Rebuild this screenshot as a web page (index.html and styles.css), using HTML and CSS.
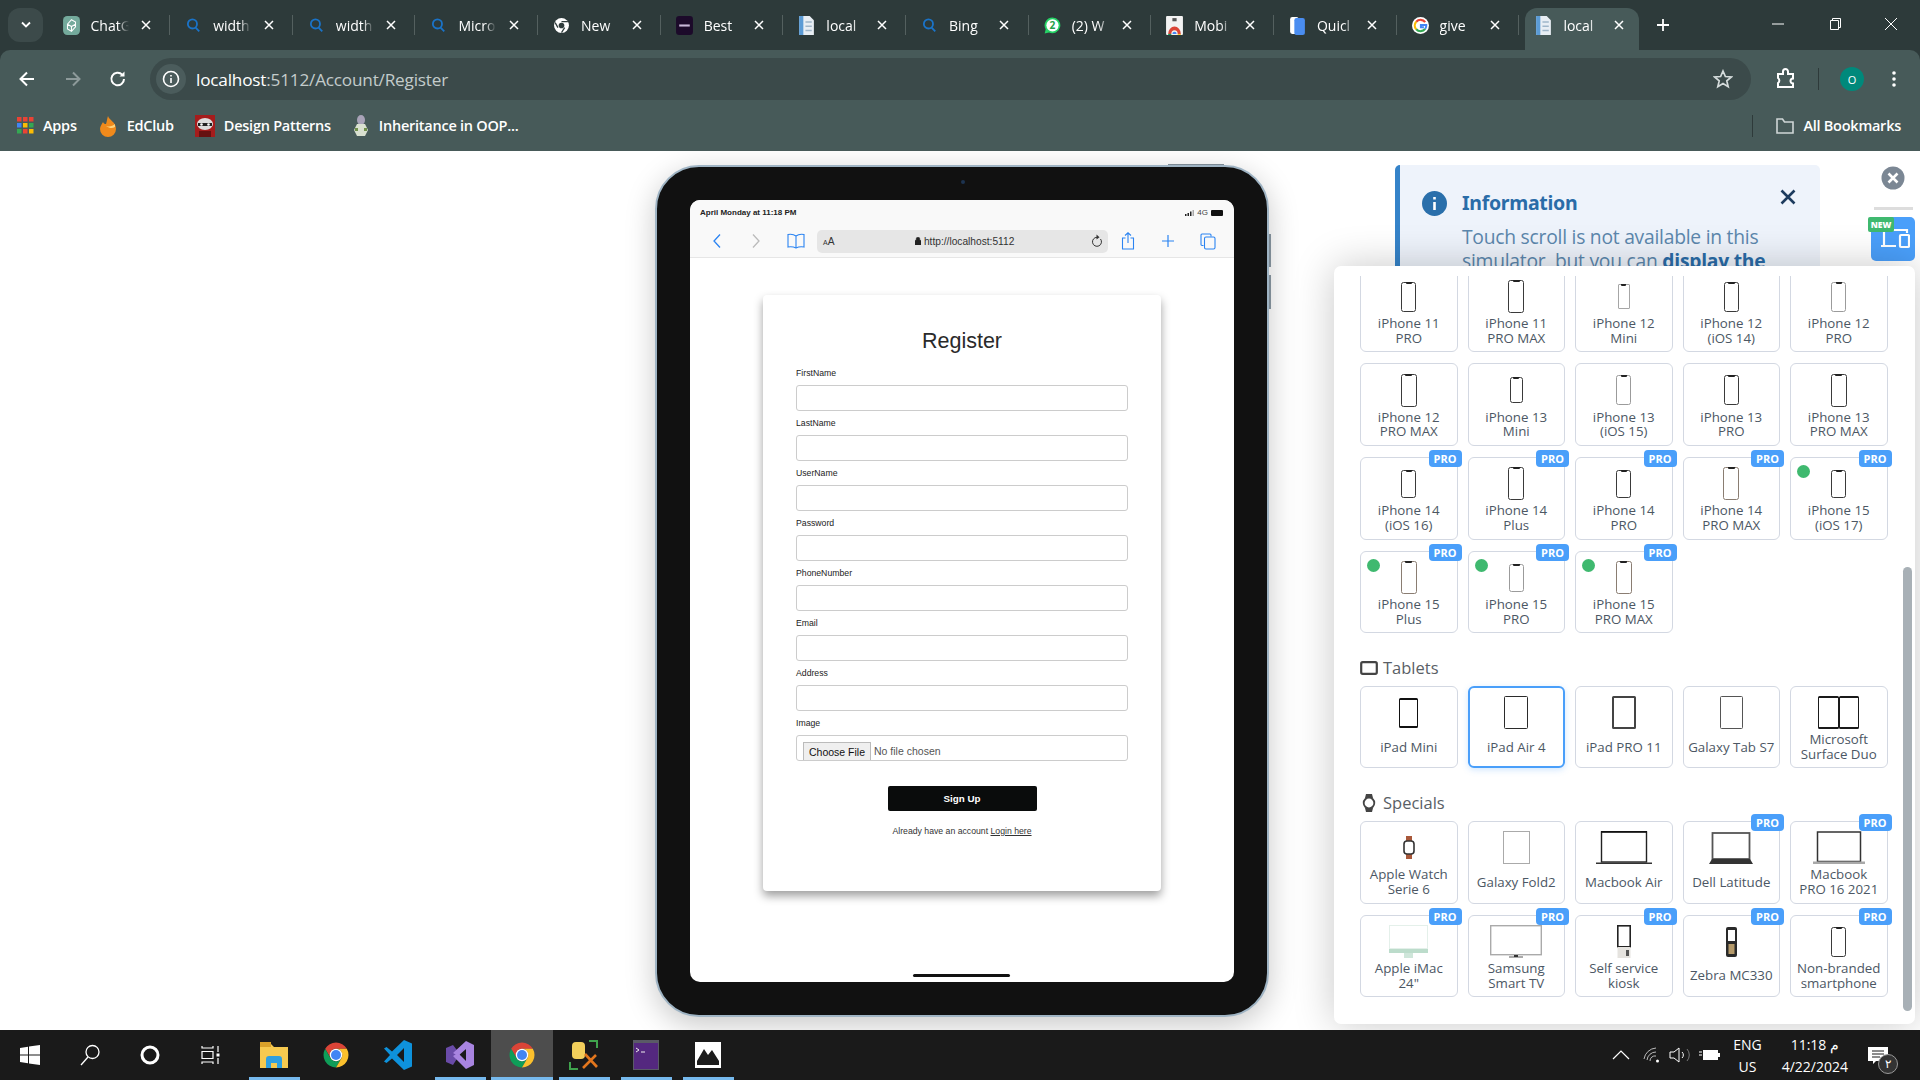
FILE: index.html
```html
<!DOCTYPE html>
<html lang="en">
<head>
    <meta charset="UTF-8">
    <title>Register</title>
    <link rel="stylesheet" href="styles.css">
</head>
<body>
    <svg class="defs" width="0" height="0">
        <symbol id="chrome" viewBox="0 0 24 24">
            <path fill="#db4437" d="M3.34 7A10 10 0 0 1 20.66 7H12A5 5 0 0 0 7.67 14.5Z"/>
            <path fill="#0f9d58" d="M3.34 7A10 10 0 0 0 12 22L16.33 14.5A5 5 0 0 1 7.67 14.5Z"/>
            <path fill="#fbc02d" d="M20.66 7A10 10 0 0 1 12 22L16.33 14.5A5 5 0 0 0 12 7Z"/>
            <circle cx="12" cy="12" r="5" fill="#fff"/>
            <circle cx="12" cy="12" r="4" fill="#4285f4"/>
        </symbol>
        <symbol id="search" viewBox="0 0 16 16">
            <circle cx="7" cy="6.5" r="4.3" fill="none" stroke="#1a73c8" stroke-width="1.7"/>
            <path d="M10 10l3.4 3.6" stroke="#1a73c8" stroke-width="1.7" fill="none"/>
        </symbol>
        <symbol id="doc" viewBox="0 0 16 18">
            <path fill="#e8eef4" d="M1 0h10l4 4v14H1z"/>
            <path fill="#5b9bd5" d="M1 0h4v18H1z"/>
            <path fill="#9fb6c9" d="M7 5h6v1.500H7zM7 9h6v1.500H7zM7 13h6v1.500H7z"/>
        </symbol>
        <symbol id="close" viewBox="0 0 12 12">
            <path d="M2 2l8 8M10 2l-8 8" fill="none" stroke="currentColor" stroke-width="1.500"/>
        </symbol>
    </svg>

    <div class="browser">
        <div class="tabstrip">
            <div class="tab-list-btn"><svg width="12" height="8" viewBox="0 0 12 8"><path d="M2 1.500l4 4 4-4" fill="none" stroke="#fff" stroke-width="1.800"/></svg></div>
            <div class="tab">
                <svg class="favicon" viewBox="0 0 16 18"><rect width="16" height="18" rx="4" fill="#74aa9c"/><path d="M8 3.500l3.800 2.200v4.600L8 14.500l-3.800-2.200V7.700z M4.200 7.700L8 10l3.800-2.300M8 10v4.500" fill="none" stroke="#fff" stroke-width="1"/></svg>
                <span class="tab-title">ChatG</span>
                <svg class="tab-close"><use href="#close"/></svg>
            </div>
            <div class="tab">
                <svg class="favicon"><use href="#search"/></svg>
                <span class="tab-title">width</span>
                <svg class="tab-close"><use href="#close"/></svg>
            </div>
            <div class="tab">
                <svg class="favicon"><use href="#search"/></svg>
                <span class="tab-title">width</span>
                <svg class="tab-close"><use href="#close"/></svg>
            </div>
            <div class="tab">
                <svg class="favicon"><use href="#search"/></svg>
                <span class="tab-title">Micro</span>
                <svg class="tab-close"><use href="#close"/></svg>
            </div>
            <div class="tab">
                <svg class="favicon" viewBox="0 0 24 24"><circle cx="12" cy="12" r="10.500" fill="#fff"/><circle cx="12" cy="12" r="4" fill="#2f3c3c"/><path d="M12 6.500h9M7 15l-4-7M16.500 15L12 22" stroke="#2f3c3c" stroke-width="1.800" fill="none"/></svg>
                <span class="tab-title">New</span>
                <svg class="tab-close"><use href="#close"/></svg>
            </div>
            <div class="tab">
                <svg class="favicon" viewBox="0 0 16 18"><rect width="16" height="18" rx="3" fill="#1c0a2a"/><rect x="3" y="8" width="10" height="2" fill="#c8b8d8"/></svg>
                <span class="tab-title">Best</span>
                <svg class="tab-close"><use href="#close"/></svg>
            </div>
            <div class="tab">
                <svg class="favicon"><use href="#doc"/></svg>
                <span class="tab-title">local</span>
                <svg class="tab-close"><use href="#close"/></svg>
            </div>
            <div class="tab">
                <svg class="favicon"><use href="#search"/></svg>
                <span class="tab-title">Bing</span>
                <svg class="tab-close"><use href="#close"/></svg>
            </div>
            <div class="tab">
                <svg class="favicon" viewBox="0 0 20 20"><path fill="#25d366" d="M10 .5a9.300 9.300 0 0 0-8 14L.8 19.500l5.100-1.300A9.300 9.300 0 1 0 10 .5z"/><circle cx="10" cy="9.800" r="7.200" fill="#fff"/><text x="10" y="14" text-anchor="middle" class="wa-count">2</text></svg>
                <span class="tab-title">(2) W</span>
                <svg class="tab-close"><use href="#close"/></svg>
            </div>
            <div class="tab">
                <svg class="favicon" viewBox="0 0 16 18"><rect width="16" height="18" rx="1" fill="#f3f3f3"/><rect x="6" y="2" width="4" height="3" fill="#555"/><path fill="#db4437" d="M2 17a6 7 0 0 1 12 0h-3a3 3.500 0 0 0-6 0z"/><path fill="#4285f4" d="M6 17a2 2 0 0 1 4 0z"/><path fill="#0f9d58" d="M2 17h3v1H2z"/><path fill="#fbc02d" d="M11 17h3v1h-3z"/></svg>
                <span class="tab-title">Mobi</span>
                <svg class="tab-close"><use href="#close"/></svg>
            </div>
            <div class="tab">
                <svg class="favicon" viewBox="0 0 16 18"><rect x="1" y="1" width="8" height="16" rx="2" fill="#fff"/><rect x="5" y="2" width="10" height="16" rx="2" fill="#4a8df0"/></svg>
                <span class="tab-title">Quicl</span>
                <svg class="tab-close"><use href="#close"/></svg>
            </div>
            <div class="tab">
                <svg class="favicon" viewBox="0 0 20 20"><circle cx="10" cy="10" r="10" fill="#fff"/><path d="M15.500 6A6.800 6.800 0 0 0 5 5.500" fill="none" stroke="#ea4335" stroke-width="2.600"/><path d="M5 5.500a6.800 6.800 0 0 0 0 9" fill="none" stroke="#fbbc05" stroke-width="2.600"/><path d="M5 14.500A6.800 6.800 0 0 0 15.500 14" fill="none" stroke="#34a853" stroke-width="2.600"/><path d="M15.500 14a6.800 6.800 0 0 0 1.300-4.500H10.500v2.500h3.500" fill="none" stroke="#4285f4" stroke-width="2.400"/></svg>
                <span class="tab-title">give</span>
                <svg class="tab-close"><use href="#close"/></svg>
            </div>
            <div class="tab tab-active">
                <svg class="favicon"><use href="#doc"/></svg>
                <span class="tab-title">local</span>
                <svg class="tab-close"><use href="#close"/></svg>
            </div>
            <svg class="new-tab" width="16" height="16" viewBox="0 0 16 16"><path d="M8 2v12M2 8h12" stroke="#fff" stroke-width="1.800"/></svg>
            <div class="win-controls">
                <svg width="14" height="14" viewBox="0 0 14 14"><path d="M1 7h12" stroke="#fff"/></svg>
                <svg width="14" height="14" viewBox="0 0 14 14"><path d="M2.500 3.500h8v9h-8zM4.500 3.500v-2h8v9h-2" fill="none" stroke="#fff"/></svg>
                <svg width="14" height="14" viewBox="0 0 14 14"><path d="M1 1l12 12M13 1L1 13" stroke="#fff"/></svg>
            </div>
        </div>

        <div class="toolbar">
            <svg class="nav-btn" viewBox="0 0 20 20"><path d="M17 10H4M10 3.500L3.500 10l6.500 6.500" fill="none" stroke="#fff" stroke-width="2"/></svg>
            <svg class="nav-btn nav-off" viewBox="0 0 20 20"><path d="M3 10h13M10 3.500l6.500 6.500-6.500 6.500" fill="none" stroke="#8d9a9a" stroke-width="2"/></svg>
            <svg class="nav-btn" viewBox="0 0 20 20"><path d="M16 10a6.300 6.300 0 1 1-1.800-4.400" fill="none" stroke="#fff" stroke-width="2"/><path d="M16.500 2.500v5h-5z" fill="#fff"/></svg>
            <div class="omnibox">
                <span class="site-info"><svg width="18" height="18" viewBox="0 0 18 18"><circle cx="9" cy="9" r="7.500" fill="none" stroke="#fff" stroke-width="1.600"/><path d="M9 8v5M9 5v1.600" stroke="#fff" stroke-width="1.600"/></svg></span>
                <span class="url"><b>localhost</b>:5112/Account/Register</span>
                <svg class="star" width="20" height="20" viewBox="0 0 20 20"><path d="M10 2l2.400 5.500 5.900.5-4.500 3.900 1.400 5.800L10 14.600l-5.200 3.100 1.400-5.800L1.700 8l5.900-.5z" fill="none" stroke="#d5dcdc" stroke-width="1.700"/></svg>
            </div>
            <svg class="ext" width="22" height="22" viewBox="0 0 22 22"><path d="M3 6h5V3.500a2.500 2.500 0 0 1 5 0V6h5v4.500a2.500 2.500 0 0 0 0 5V19H3v-4a3 3 0 0 0 0-5z" fill="none" stroke="#fff" stroke-width="2"/></svg>
            <span class="vsep"></span>
            <span class="avatar">O</span>
            <svg class="dots" width="4" height="18" viewBox="0 0 4 18"><circle cx="2" cy="3" r="1.800" fill="#fff"/><circle cx="2" cy="9" r="1.800" fill="#fff"/><circle cx="2" cy="15" r="1.800" fill="#fff"/></svg>
        </div>

        <div class="bookmarks">
            <a class="bm">
                <svg class="bm-apps" width="17" height="17" viewBox="0 0 17 17"><path fill="#ea4335" d="M0 0h4.500v4.500H0zM6 0h4.500v4.500H6zM12 0h4.500v4.500H12z"/><path fill="#4285f4" d="M0 6h4.500v4.500H0z"/><path fill="#fbbc05" d="M6 6h4.500v4.500H6z"/><path fill="#34a853" d="M12 6h4.500v4.500H12z"/><path fill="#34a853" d="M0 12h4.500v4.500H0z"/><path fill="#ea4335" d="M6 12h4.500v4.500H6z"/><path fill="#fbbc05" d="M12 12h4.500v4.500H12z"/></svg>
                Apps
            </a>
            <a class="bm">
                <svg width="20" height="22" viewBox="0 0 20 22"><path d="M10 1c1 4 8 6 8 13a8 8 0 0 1-16 0c0-3 2-5 3-7 1 2 2 2 3 2 1-3 1-5 2-8z" fill="#f08a1c"/><path d="M8 11c3 1 7 0 9-2v3c-3 2-6 1-9-1z" fill="#ffd27a"/></svg>
                EdClub
            </a>
            <a class="bm">
                <svg width="20" height="22" viewBox="0 0 20 22"><rect width="20" height="22" fill="#a51c1c"/><ellipse cx="10" cy="9" rx="8" ry="6" fill="#ddd"/><path d="M3 8h14v3H3z" fill="#222"/><circle cx="6.500" cy="9.500" r="1.300" fill="#fff"/><circle cx="13.500" cy="9.500" r="1.300" fill="#fff"/><path d="M4 16h12v6H4z" fill="#611"/></svg>
                Design Patterns
            </a>
            <a class="bm">
                <svg width="18" height="22" viewBox="0 0 18 22"><ellipse cx="9" cy="5" rx="4" ry="5" fill="#a9a3b8"/><path d="M5 9h8l3 6-3 6H5l-3-6z" fill="#d9e0d0"/><path d="M3 13h3v3H3zM12 13h3v3h-3z" fill="#6f8f4a"/></svg>
                Inheritance in OOP...
            </a>
            <span class="bm-spacer"></span>
            <span class="vsep bm-sep"></span>
            <a class="bm bm-all">
                <svg width="20" height="18" viewBox="0 0 20 18"><path d="M2 16V2h5.500l2 3H18v11z" fill="none" stroke="#cfd6d6" stroke-width="1.600"/></svg>
                All Bookmarks
            </a>
        </div>
    </div>

    <main class="desk">
        <div class="ipad">
            <span class="camera"></span>
            <span class="side-btn side-top"></span>
            <span class="side-btn side-one"></span>
            <span class="side-btn side-two"></span>
            <div class="screen">
                <div class="statusbar">
                    <span>April Monday at 11:18 PM</span>
                    <span class="status-right">
                        <svg width="9" height="6" viewBox="0 0 9 6"><path fill="#222" d="M0 4h1.500v2H0zM2.500 3H4v3H2.500zM5 1.500h1.500V6H5z"/><path fill="#aaa" d="M7.500 0H9v6H7.500z"/></svg>
                        4G
                        <span class="battery"></span>
                    </span>
                </div>
                <div class="safari-bar">
                    <svg class="s-ic s-back" viewBox="0 0 10 16"><path d="M8 1.500L2 8l6 6.500" fill="none" stroke="#2b84f2" stroke-width="1.300"/></svg>
                    <svg class="s-ic s-fwd" viewBox="0 0 10 16"><path d="M2 1.500L8 8l-6 6.500" fill="none" stroke="#bbb" stroke-width="1.300"/></svg>
                    <svg class="s-ic s-book" viewBox="0 0 18 16"><path d="M9 3C7 1.500 4 1 1 1.500V14c3-.5 6 0 8 1 2-1 5-1.500 8-1V1.500C14 1 11 1.500 9 3zM9 3v12" fill="none" stroke="#2b84f2" stroke-width="1.100"/></svg>
                    <div class="s-url">
                        <span class="s-aa"><small>A</small>A</span>
                        <span class="s-addr"><svg width="6" height="8" viewBox="0 0 6 8"><path d="M0 3.500h6V8H0zM1.200 3.500V2a1.800 1.800 0 0 1 3.600 0v1.500" fill="#222" stroke="#222" stroke-width=".6"/></svg> http://localhost:5112</span>
                        <svg width="12" height="14" viewBox="0 0 12 14"><path d="M9.500 5a4.500 4.500 0 1 1-3.500-1.700" fill="none" stroke="#333" stroke-width="1"/><path d="M5.500 0.500L8.500 3.300 5.500 5.500z" fill="#333"/></svg>
                    </div>
                    <svg class="s-ic s-share" viewBox="0 0 14 18"><path d="M4.500 6H1.500v11h11V6H9.500M7 11V1M4 3.500L7 .8l3 2.700" fill="none" stroke="#2b84f2" stroke-width="1.100"/></svg>
                    <svg class="s-ic s-plus" viewBox="0 0 14 14"><path d="M7 1v12M1 7h12" stroke="#2b84f2" stroke-width="1.200"/></svg>
                    <svg class="s-ic s-copy" viewBox="0 0 16 17"><path d="M3.500 12.500H2a1 1 0 0 1-1-1V2a1 1 0 0 1 1-1h8a1 1 0 0 1 1 1v1.500" fill="none" stroke="#2b84f2" stroke-width="1.100"/><rect x="4.500" y="4" width="10.500" height="12" rx="1.500" fill="none" stroke="#2b84f2" stroke-width="1.100"/></svg>
                </div>
                <div class="register-card">
                    <h1>Register</h1>
                    <div class="field"><label>FirstName</label><input type="text"></div>
                    <div class="field"><label>LastName</label><input type="text"></div>
                    <div class="field"><label>UserName</label><input type="text"></div>
                    <div class="field"><label>Password</label><input type="text"></div>
                    <div class="field"><label>PhoneNumber</label><input type="text"></div>
                    <div class="field"><label>Email</label><input type="text"></div>
                    <div class="field"><label>Address</label><input type="text"></div>
                    <div class="field">
                        <label>Image</label>
                        <div class="file-input"><span class="file-btn">Choose File</span><span class="file-none">No file chosen</span></div>
                    </div>
                    <button class="signup" type="button">Sign Up</button>
                    <p class="have-account">Already have an account <a>Login here</a></p>
                </div>
                <span class="home-bar"></span>
            </div>
        </div>

        <div class="info-box">
            <svg class="info-icon" width="25" height="25" viewBox="0 0 25 25"><circle cx="12.500" cy="12.500" r="12.500" fill="#2a6fab"/><path d="M12.500 11v8M12.500 6v2.500" stroke="#fff" stroke-width="2.600"/></svg>
            <div class="info-body">
                <h3>Information</h3>
                <p>Touch scroll is not available in this simulator, but you can <b>display the</b></p>
            </div>
            <svg class="info-close" width="16" height="16" viewBox="0 0 16 16"><path d="M1.500 1.500l13 13M14.500 1.500l-13 13" stroke="#1d3b5e" stroke-width="2.600"/></svg>
        </div>

        <svg class="round-close" width="24" height="24" viewBox="0 0 24 24"><circle cx="12" cy="12" r="11.500" fill="#7b8794"/><path d="M7.500 7.500l9 9M16.500 7.500l-9 9" stroke="#fff" stroke-width="2.600"/></svg>
        <span class="side-divider"></span>
        <div class="devices-btn">
            <span class="new-badge">NEW</span>
            <svg width="30" height="22" viewBox="0 0 30 22"><path d="M4 2v16M1 19h15M6 3h21v3" fill="none" stroke="#fff" stroke-width="2.200"/><rect x="20" y="8" width="9" height="12" rx="1" fill="none" stroke="#fff" stroke-width="2.200"/><rect x="1" y="18" width="15" height="2" fill="#fff"/></svg>
        </div>

        <div class="device-panel">
            <div class="device-scroll">
                <div class="device-grid">
                    <div class="device"><div class="device-img"><span class="phone ph-md"></span></div><div class="device-name">iPhone 11<br>PRO</div></div>
                    <div class="device"><div class="device-img"><span class="phone ph-lg"></span></div><div class="device-name">iPhone 11<br>PRO MAX</div></div>
                    <div class="device"><div class="device-img"><span class="phone ph-sm ph-light"></span></div><div class="device-name">iPhone 12<br>Mini</div></div>
                    <div class="device"><div class="device-img"><span class="phone ph-md"></span></div><div class="device-name">iPhone 12<br>(iOS 14)</div></div>
                    <div class="device"><div class="device-img"><span class="phone ph-md ph-silver"></span></div><div class="device-name">iPhone 12<br>PRO</div></div>

                    <div class="device"><div class="device-img"><span class="phone ph-lg"></span></div><div class="device-name">iPhone 12<br>PRO MAX</div></div>
                    <div class="device"><div class="device-img"><span class="phone ph-mini"></span></div><div class="device-name">iPhone 13<br>Mini</div></div>
                    <div class="device"><div class="device-img"><span class="phone ph-md ph-silver"></span></div><div class="device-name">iPhone 13<br>(iOS 15)</div></div>
                    <div class="device"><div class="device-img"><span class="phone ph-md"></span></div><div class="device-name">iPhone 13<br>PRO</div></div>
                    <div class="device"><div class="device-img"><span class="phone ph-lg"></span></div><div class="device-name">iPhone 13<br>PRO MAX</div></div>

                    <div class="device"><span class="pro">PRO</span><div class="device-img"><span class="phone ph-short"></span></div><div class="device-name">iPhone 14<br>(iOS 16)</div></div>
                    <div class="device"><span class="pro">PRO</span><div class="device-img"><span class="phone ph-lg"></span></div><div class="device-name">iPhone 14<br>Plus</div></div>
                    <div class="device"><span class="pro">PRO</span><div class="device-img"><span class="phone ph-short"></span></div><div class="device-name">iPhone 14<br>PRO</div></div>
                    <div class="device"><span class="pro">PRO</span><div class="device-img"><span class="phone ph-lg ph-brown"></span></div><div class="device-name">iPhone 14<br>PRO MAX</div></div>
                    <div class="device"><span class="pro">PRO</span><span class="dot"></span><div class="device-img"><span class="phone ph-short"></span></div><div class="device-name">iPhone 15<br>(iOS 17)</div></div>

                    <div class="device"><span class="pro">PRO</span><span class="dot"></span><div class="device-img"><span class="phone ph-lg ph-brown"></span></div><div class="device-name">iPhone 15<br>Plus</div></div>
                    <div class="device"><span class="pro">PRO</span><span class="dot"></span><div class="device-img"><span class="phone ph-short ph-silver"></span></div><div class="device-name">iPhone 15<br>PRO</div></div>
                    <div class="device"><span class="pro">PRO</span><span class="dot"></span><div class="device-img"><span class="phone ph-lg ph-brown"></span></div><div class="device-name">iPhone 15<br>PRO MAX</div></div>
                </div>

                <h4 class="section-title">
                    <svg width="18" height="14" viewBox="0 0 18 14"><rect x="1.200" y="1.200" width="15.600" height="11.600" rx="1.500" fill="none" stroke="#444" stroke-width="2.200"/></svg>
                    Tablets
                </h4>
                <div class="device-grid">
                    <div class="device"><div class="device-img"><span class="tablet-ic tab-mini"></span></div><div class="device-name">iPad Mini</div></div>
                    <div class="device device-selected"><div class="device-img"><span class="tablet-ic tab-air"></span></div><div class="device-name">iPad Air 4</div></div>
                    <div class="device"><div class="device-img"><span class="tablet-ic tab-air tab-grey"></span></div><div class="device-name">iPad PRO 11</div></div>
                    <div class="device"><div class="device-img"><span class="tablet-ic tab-galaxy"></span></div><div class="device-name">Galaxy Tab S7</div></div>
                    <div class="device"><div class="device-img"><span class="tablet-ic tab-duo"></span><span class="tablet-ic tab-duo"></span></div><div class="device-name">Microsoft<br>Surface Duo</div></div>
                </div>

                <h4 class="section-title">
                    <svg width="18" height="20" viewBox="0 0 18 20"><path d="M6 1h6l1 4H5zM5 15h8l-1 4H6z" fill="#444"/><circle cx="9" cy="10" r="5.300" fill="none" stroke="#444" stroke-width="1.800"/></svg>
                    Specials
                </h4>
                <div class="device-grid">
                    <div class="device">
                        <div class="device-img">
                            <svg width="12" height="23" viewBox="0 0 12 23"><path d="M3 0h6v5H3zM3 18h6v5H3z" fill="#a8583a"/><rect x="1" y="5" width="10" height="13" rx="3" fill="#fff" stroke="#333" stroke-width="1.600"/></svg>
                        </div>
                        <div class="device-name">Apple Watch<br>Serie 6</div>
                    </div>
                    <div class="device"><div class="device-img"><span class="tablet-ic tab-fold"></span></div><div class="device-name">Galaxy Fold2</div></div>
                    <div class="device">
                        <div class="device-img">
                            <svg width="56" height="33" viewBox="0 0 56 33"><rect x="5.500" y="1" width="45" height="30" fill="#fff" stroke="#222" stroke-width="1.400"/><rect x="5" y="0" width="46" height="1.500" fill="#111"/><path d="M0 31.500h56v1.500H0z" fill="#333"/></svg>
                        </div>
                        <div class="device-name">Macbook Air</div>
                    </div>
                    <div class="device">
                        <span class="pro">PRO</span>
                        <div class="device-img">
                            <svg width="44" height="32" viewBox="0 0 44 32"><rect x="3.500" y="1" width="37" height="26" fill="#fff" stroke="#555" stroke-width="1.800"/><path d="M3 27h38l3 5H0z" fill="#333"/></svg>
                        </div>
                        <div class="device-name">Dell Latitude</div>
                    </div>
                    <div class="device">
                        <span class="pro">PRO</span>
                        <div class="device-img">
                            <svg width="52" height="33" viewBox="0 0 52 33"><rect x="4.500" y="1" width="43" height="29.500" fill="#fff" stroke="#333" stroke-width="1.500"/><path d="M0 30.500h52V33H0z" fill="#a9a9a9"/></svg>
                        </div>
                        <div class="device-name">Macbook<br>PRO 16 2021</div>
                    </div>

                    <div class="device">
                        <span class="pro">PRO</span>
                        <div class="device-img">
                            <svg width="39" height="33" viewBox="0 0 39 33"><rect x=".5" y=".5" width="38" height="23" fill="#fff" stroke="#e4f0ea"/><rect y="24" width="39" height="4" fill="#bcdccb"/><rect x="15" y="28" width="9" height="5" fill="#cfe6da"/></svg>
                        </div>
                        <div class="device-name">Apple iMac<br>24"</div>
                    </div>
                    <div class="device">
                        <span class="pro">PRO</span>
                        <div class="device-img">
                            <svg width="52" height="33" viewBox="0 0 52 33"><rect x=".7" y=".7" width="50.600" height="29" fill="#fff" stroke="#aaa" stroke-width="1.400"/><path d="M19 31h14v2H19z" fill="#aaa"/><rect x="24" y="30" width="4" height="2" fill="#333"/></svg>
                        </div>
                        <div class="device-name">Samsung<br>Smart TV</div>
                    </div>
                    <div class="device">
                        <span class="pro">PRO</span>
                        <div class="device-img">
                            <svg width="14" height="33" viewBox="0 0 14 33"><rect x=".8" y=".8" width="12.400" height="21" fill="#fff" stroke="#222" stroke-width="1.600"/><rect x=".5" y="22" width="13" height="11" fill="#e5e3df"/><rect x="9" y="25" width="3" height="6" fill="#555"/></svg>
                        </div>
                        <div class="device-name">Self service<br>kiosk</div>
                    </div>
                    <div class="device">
                        <span class="pro">PRO</span>
                        <div class="device-img">
                            <svg width="11" height="30" viewBox="0 0 11 30"><rect width="11" height="30" rx="2" fill="#2a2a2a"/><rect x="2" y="3" width="7" height="11" fill="#fff"/><path d="M2.500 17h6v10h-6z" fill="#b59a6a"/></svg>
                        </div>
                        <div class="device-name">Zebra MC330</div>
                    </div>
                    <div class="device">
                        <span class="pro">PRO</span>
                        <div class="device-img"><span class="phone ph-md"></span></div>
                        <div class="device-name">Non-branded<br>smartphone</div>
                    </div>
                </div>
            </div>
            <span class="panel-scrollbar"></span>
        </div>
    </main>

    <footer class="taskbar">
        <div class="task-start">
            <svg class="task-ic" width="20" height="20" viewBox="0 0 20 20"><path fill="#fff" d="M0 3l8-1.200V9.500H0zM9 1.600L20 0v9.500H9zM0 10.500h8v7.700L0 17zM9 10.500h11V20L9 18.400z"/></svg>
        </div>
        <div class="task-start">
            <svg class="task-ic" width="20" height="22" viewBox="0 0 20 22"><circle cx="12.500" cy="8" r="6.500" fill="none" stroke="#fff" stroke-width="1.300"/><path d="M8 13l-7 8" stroke="#fff" stroke-width="1.300"/></svg>
        </div>
        <div class="task-start">
            <svg class="task-ic" width="20" height="20" viewBox="0 0 20 20"><circle cx="10" cy="10" r="8" fill="none" stroke="#fff" stroke-width="3"/></svg>
        </div>
        <div class="task-start">
            <svg class="task-ic" width="20" height="20" viewBox="0 0 20 20"><path d="M2 1v2h11V1M2 6.500h11v7H2zM2 19v-2h11v2M18 1v6M18 13v6" fill="none" stroke="#fff" stroke-width="1.200"/><rect x="16.500" y="8.500" width="3" height="3" fill="#fff"/></svg>
        </div>
        <span class="task-gap"></span>
        <div class="task-app task-running">
            <svg width="28" height="26" viewBox="0 0 28 26"><path d="M0 2h11l3 3h14v21H0z" fill="#f6c94f"/><path d="M0 0h11v5H0z" fill="#d8a02a"/><path d="M6 26v-9a3 3 0 0 1 3-3h10a3 3 0 0 1 3 3v9h-5v-5h-6v5z" fill="#2f9fe0"/></svg>
        </div>
        <div class="task-app"><svg width="30" height="30"><use href="#chrome"/></svg></div>
        <div class="task-app">
            <svg width="30" height="30" viewBox="0 0 30 30"><path d="M21 0l8 3.500v23L21 30 9 18.500 3.500 23 1 21.500 7 15 1 8.500 3.500 7 9 11.500zM21 8l-7 7 7 7z" fill="#0e92dc"/></svg>
        </div>
        <div class="task-app task-running">
            <svg width="30" height="30" viewBox="0 0 30 30"><path d="M1 8l7-3 7 9-7 11-7-3z" fill="#6a4ba8"/><path d="M21 1l8 4v20l-8 4L8 16l5-3 8 8V9l-8 7-5-3z" fill="#a884e0"/></svg>
        </div>
        <div class="task-app task-active task-running"><svg width="30" height="30"><use href="#chrome"/></svg></div>
        <div class="task-app task-running">
            <svg width="30" height="30" viewBox="0 0 30 30"><rect x="3" y="2" width="13" height="17" rx="4" fill="#f2cf5b"/><path d="M20 1h8v7M1 22v7h8" fill="none" stroke="#3fa34d" stroke-width="2"/><path d="M14 28l13-13M28 27L16 14" stroke="#e2761d" stroke-width="2.600"/></svg>
        </div>
        <div class="task-app task-running">
            <svg width="26" height="30" viewBox="0 0 26 30"><rect width="26" height="30" fill="#5a5a66"/><rect x="1" y="3" width="24" height="26" fill="#54287f"/><path d="M3 8l3 2-3 2M8 12h4" fill="none" stroke="#eee"/></svg>
        </div>
        <div class="task-app task-running">
            <svg width="26" height="26" viewBox="0 0 26 26"><rect width="26" height="26" fill="#fff"/><path d="M2 19L9 7l4 6 4-5 7 11v4H2z" fill="#1c1c1c"/></svg>
        </div>
        <span class="task-spacer"></span>
        <svg class="tray-ic tray-chevron" width="18" height="10" viewBox="0 0 18 10"><path d="M1 9l8-8 8 8" fill="none" stroke="#fff" stroke-width="1.200"/></svg>
        <svg class="tray-ic tray-wifi" width="18" height="16" viewBox="0 0 18 16"><path d="M1 12a13 13 0 0 1 12-11M4 13a9 9 0 0 1 9-8M7 14a5 5 0 0 1 6-5" fill="none" stroke="#bbb" stroke-width="1"/><circle cx="14.500" cy="14" r="1.500" fill="#fff"/></svg>
        <svg class="tray-ic tray-vol" width="22" height="16" viewBox="0 0 22 16"><path d="M1 5h4l5-4v14l-5-4H1z" fill="none" stroke="#fff"/><path d="M13 5a4 4 0 0 1 0 6" fill="none" stroke="#fff"/><path d="M18 2a9 9 0 0 1 0 12" fill="none" stroke="#777"/></svg>
        <svg class="tray-ic tray-batt" width="21" height="12" viewBox="0 0 21 12"><path d="M0 3h3M0 6h3" stroke="#fff"/><rect x="4.500" y="1.500" width="14" height="9" fill="#fff" stroke="#fff"/><rect x="19" y="4" width="2" height="4" fill="#fff"/></svg>
        <div class="tray-text tray-lang"><span>ENG</span><span>US</span></div>
        <div class="tray-text tray-clock"><span>11:18 م</span><span>4/22/2024</span></div>
        <div class="tray-notify">
            <svg width="20" height="17" viewBox="0 0 20 17"><path d="M0 0h20v14H8l-3 3v-3H0z" fill="#fff"/><path d="M4 4h12M4 7h12M4 10h8" stroke="#1a1a1a"/></svg>
            <span class="notify-count">٢</span>
        </div>
    </footer>
</body>
</html>
```

FILE: styles.css
```css
* {
    box-sizing: border-box;
}
html, body {
    height: 100%;
}
body {
    margin: 0;
    width: 1920px;
    height: 1080px;
    overflow: hidden;
    display: flex;
    flex-direction: column;
    background-color: #fff;
    font-family: "Open Sans", "Liberation Sans", sans-serif;
}
.defs {
    position: absolute;
}

/* browser chrome */
.browser {
    flex: 0 0 151px;
    background-color: #2d3a3a;
    color: #fff;
}
.tabstrip {
    height: 50px;
    display: flex;
    align-items: center;
    padding-left: 8px;
}
.tab-list-btn {
    width: 35px;
    height: 34px;
    margin-right: 4.5px;
    display: flex;
    align-items: center;
    justify-content: center;
    background-color: #3c4a4a;
    border-radius: 12px;
}
.tab {
    position: relative;
    flex: 0 0 122.65px;
    height: 42px;
    margin-top: 8px;
    display: flex;
    align-items: center;
    padding-left: 15px;
    font-size: 14px;
}
.tab::after {
    content: "";
    position: absolute;
    right: 0;
    top: 7px;
    height: 20px;
    width: 1px;
    background-color: #54605f;
}
.tab-active {
    background-color: #475a59;
    border-radius: 12px 12px 0 0;
    margin-left: 5.7px;
    flex-basis: 114px;
    padding-left: 10.5px;
}
.tab-active::after {
    display: none;
}
.favicon {
    flex: none;
    width: 17px;
    height: 19px;
    margin-top: -8px;
    margin-right: 11px;
}
.wa-count {
    font-size: 12px;
    font-weight: 700;
    fill: #25a04a;
    font-family: "Open Sans", sans-serif;
}
.tab-title {
    flex: none;
    width: 38px;
    margin-top: -8px;
    white-space: nowrap;
    -webkit-mask-image: linear-gradient(to right, #000 70%, transparent);
    mask-image: linear-gradient(to right, #000 70%, transparent);
}
.tab-close {
    flex: none;
    width: 12px;
    height: 12px;
    margin-top: -8px;
    margin-left: 11.5px;
    color: #fff;
}
.new-tab {
    margin-left: 16px;
}
.win-controls {
    margin-left: auto;
    display: flex;
    gap: 42.5px;
    padding-right: 22px;
    margin-top: -2px;
}

.toolbar {
    height: 50px;
    display: flex;
    align-items: center;
    padding: 8px 0 0 17px;
    background-color: #475a59;
    border-radius: 10px 10px 0 0;
}
.nav-btn {
    flex: none;
    width: 20px;
    height: 20px;
    margin-right: 26px;
}
.nav-off {
    margin-right: 25px;
}
.omnibox {
    flex: none;
    margin-left: -4px;
    width: 1601px;
    height: 42px;
    display: flex;
    align-items: center;
    padding-left: 6px;
    background-color: #3b4a4a;
    border-radius: 21px;
}
.site-info {
    width: 30px;
    height: 30px;
    display: flex;
    align-items: center;
    justify-content: center;
    background-color: #4b5c5c;
    border-radius: 50%;
}
.url {
    margin-left: 10px;
    font-size: 17.2px;
    color: #c3cccb;
    letter-spacing: -0.2px;
}
.url b {
    font-weight: 400;
    color: #fff;
}
.star {
    margin-left: auto;
    margin-right: 18px;
}
.ext {
    margin-left: 24px;
}
.vsep {
    width: 1px;
    height: 22px;
    background-color: #2e3a3a;
    margin-left: 21px;
}
.avatar {
    width: 24px;
    height: 24px;
    margin-left: 21px;
    display: flex;
    align-items: center;
    justify-content: center;
    background-color: #00897b;
    border-radius: 50%;
    font-size: 11px;
}
.dots {
    margin-left: 28px;
}

.bookmarks {
    height: 51px;
    display: flex;
    align-items: center;
    padding: 0 19px 0 17px;
    background-color: #475a59;
    font-size: 14.5px;
    font-weight: 600;
}
.bm {
    display: flex;
    align-items: center;
    gap: 9px;
    margin-right: 21px;
    letter-spacing: -0.25px;
}
.bm-spacer {
    flex: 1;
}
.bm-sep {
    margin: 0 22px 0 0;
}
.bm-all {
    margin-right: 0;
    gap: 8px;
}

/* page behind the simulator */
.desk {
    position: relative;
    flex: 1;
    padding: 14px 0 0 655px;
    overflow: hidden;
    background-color: #fff;
}
.ipad {
    position: relative;
    width: 614px;
    height: 852px;
    padding: 33px;
    background-color: #111;
    border: 2px solid #9fb4c4;
    border-radius: 44px;
    box-shadow: 0 8px 30px rgba(0, 0, 0, 0.22);
}
.camera {
    position: absolute;
    left: 304px;
    top: 13px;
    width: 4px;
    height: 4px;
    background-color: #1d3350;
    border-radius: 50%;
}
.side-btn {
    position: absolute;
    background-color: #7d8a94;
}
.side-top {
    left: 511px;
    top: -3px;
    width: 56px;
    height: 1px;
}
.side-one {
    right: -4px;
    top: 67px;
    width: 2px;
    height: 33px;
}
.side-two {
    right: -4px;
    top: 108px;
    width: 2px;
    height: 34px;
}
.screen {
    position: relative;
    height: 782px;
    background-color: #fff;
    border-radius: 10px;
    overflow: hidden;
    font-family: "Liberation Sans", Arial, sans-serif;
}
.statusbar {
    height: 25px;
    display: flex;
    align-items: center;
    justify-content: space-between;
    padding: 0 11px 0 10px;
    background-color: #f9f9f9;
    font-size: 8px;
    font-weight: 700;
    color: #222;
}
.status-right {
    display: flex;
    align-items: center;
    gap: 3px;
    font-weight: 400;
    color: #444;
}
.battery {
    width: 12px;
    height: 6px;
    background-color: #111;
    border-radius: 1px;
}
.safari-bar {
    height: 33px;
    display: flex;
    align-items: center;
    padding-left: 22px;
    background-color: #f9f9f9;
    border-bottom: 1px solid #e6e6e6;
}
.s-ic {
    flex: none;
}
.s-back, .s-fwd {
    width: 10px;
    height: 16px;
}
.s-back {
    margin-right: 29px;
}
.s-fwd {
    margin-right: 26px;
}
.s-book {
    width: 18px;
    height: 16px;
    margin-right: 12px;
}
.s-url {
    flex: none;
    width: 291px;
    height: 23px;
    display: flex;
    align-items: center;
    justify-content: space-between;
    padding: 0 5px 0 6px;
    background-color: #e6e6e6;
    border-radius: 5px;
    font-size: 10.2px;
    color: #333;
}
.s-aa small {
    font-size: 7px;
}
.s-addr {
    margin-left: 4px;
}
.s-share {
    width: 14px;
    height: 18px;
    margin-left: 13px;
}
.s-plus {
    width: 14px;
    height: 14px;
    margin-left: 26px;
}
.s-copy {
    width: 16px;
    height: 17px;
    margin-left: 25px;
}
.home-bar {
    position: absolute;
    left: 223px;
    bottom: 5px;
    width: 97px;
    height: 3px;
    background-color: #111;
    border-radius: 2px;
}

/* register form */
.register-card {
    width: 398px;
    height: 596px;
    margin: 37px 0 0 73px;
    padding: 33px 33px 0;
    background-color: #fff;
    border-radius: 4px;
    box-shadow: 0 5px 10px rgba(0, 0, 0, 0.38);
}
h1 {
    margin: 0 0 13px;
    font-size: 21.5px;
    font-weight: 400;
    line-height: 26px;
    text-align: center;
    color: #2a2a2a;
}
.field {
    margin-bottom: 6px;
}
.field label {
    display: block;
    height: 12px;
    margin-bottom: 6px;
    font-size: 8.7px;
    line-height: 13px;
    color: #222;
}
.field input,
.file-input {
    display: block;
    width: 100%;
    height: 26px;
    border: 1px solid #ccc;
    border-radius: 3px;
    background-color: #fff;
}
.file-input {
    display: flex;
    align-items: flex-end;
    overflow: hidden;
    padding-left: 6px;
    font-size: 10.5px;
    color: #555;
}
.file-btn {
    height: 18px;
    line-height: 18px;
    padding: 0 5px;
    margin-right: 3px;
    background-color: #efefef;
    border: 1px solid #bbb;
    border-bottom: 0;
    color: #111;
}
.file-none {
    line-height: 18px;
}
.signup {
    display: block;
    width: 149px;
    height: 25px;
    margin: 25px auto 0;
    background-color: #0a0c0c;
    color: #fff;
    border: none;
    border-radius: 2px;
    font-family: inherit;
    font-size: 9.8px;
    font-weight: 700;
}
.have-account {
    margin: 14px 0 0;
    font-size: 8.7px;
    line-height: 12px;
    text-align: center;
    color: #333;
}
.have-account a {
    text-decoration: underline;
}

/* simulator notice and side buttons */
.info-box {
    position: absolute;
    left: 1395px;
    top: 14px;
    width: 425px;
    height: 110px;
    display: flex;
    padding: 26px 0 0 22px;
    background-color: #eef3fb;
    border-left: 5px solid #3583c9;
    border-radius: 5px;
    overflow: hidden;
}
.info-icon {
    flex: none;
}
.info-body {
    width: 310px;
    margin-left: 15px;
    color: #5c87ad;
}
.info-body h3 {
    margin: -1px 0 9px;
    font-size: 19.5px;
    font-weight: 700;
    line-height: 26px;
    color: #2a6ca8;
    font-family: "Noto Sans", sans-serif;
    letter-spacing: -0.3px;
}
.info-body p {
    margin: 0;
    font-size: 19.3px;
    line-height: 24px;
    letter-spacing: -0.25px;
}
.info-body b {
    color: #2a6ca8;
}
.info-close {
    flex: none;
    margin: 0 0 0 8px;
    position: relative;
    top: -2px;
}
.round-close {
    position: absolute;
    left: 1881px;
    top: 15px;
}
.side-divider {
    position: absolute;
    left: 1874px;
    top: 56px;
    width: 39px;
    height: 3px;
    background-color: #ddd;
}
.devices-btn {
    position: absolute;
    left: 1871px;
    top: 66px;
    width: 44px;
    height: 44px;
    padding: 10px 0 0 9px;
    background-color: #4a9ffa;
    border-radius: 5px;
}
.new-badge {
    position: absolute;
    left: -3px;
    top: 0;
    width: 26px;
    height: 15px;
    background-color: #3fb96f;
    border-radius: 2px;
    color: #fff;
    font-size: 8.5px;
    font-weight: 800;
    line-height: 15px;
    text-align: center;
}

/* device picker */
.device-panel {
    position: absolute;
    left: 1334px;
    top: 115px;
    width: 581px;
    height: 758px;
    padding: 10px 0 0 26px;
    background-color: #fff;
    border-radius: 7px;
    box-shadow: 0 0 40px rgba(0, 0, 0, 0.22);
}
.device-scroll {
    height: 740px;
    overflow: hidden;
}
.device-grid {
    display: grid;
    grid-template-columns: repeat(5, 97.5px);
    grid-auto-rows: 82.7px;
    column-gap: 10px;
    row-gap: 11px;
    padding-right: 4px;
}
.device-scroll > .device-grid:first-child {
    margin-top: -6.5px;
}
.device {
    position: relative;
    padding-top: 9px;
    border: 1px solid #d3d8e2;
    border-radius: 6px;
    background-color: #fff;
}
.device-selected {
    border: 2px solid #4a9ffa;
    padding-top: 8px;
    box-shadow: 0 2px 6px rgba(74, 159, 250, 0.25);
}
.device-img {
    height: 34px;
    display: flex;
    align-items: center;
    justify-content: center;
}
.device-name {
    height: 28px;
    margin-top: 3px;
    display: flex;
    align-items: center;
    justify-content: center;
    text-align: center;
    font-size: 13.3px;
    line-height: 14.5px;
    color: #4c5764;
    white-space: nowrap;
}
.pro {
    position: absolute;
    top: -8px;
    right: -5px;
    width: 33px;
    height: 17px;
    background-color: #4a9ffa;
    border-radius: 4px;
    color: #fff;
    font-size: 11px;
    font-weight: 700;
    line-height: 17px;
    text-align: center;
}
.dot {
    position: absolute;
    left: 6px;
    top: 7px;
    width: 13px;
    height: 13px;
    background-color: #3fb96f;
    border-radius: 50%;
}
.phone {
    position: relative;
    display: block;
    border: 1.3px solid #3a3a3a;
    border-radius: 2.5px;
    background-color: #fff;
}
.phone::before {
    content: "";
    position: absolute;
    left: 25%;
    right: 25%;
    top: -1px;
    height: 2px;
    background-color: #222;
    border-radius: 0 0 1px 1px;
}
.ph-sm {
    width: 12px;
    height: 25px;
}
.ph-mini {
    width: 13.5px;
    height: 26px;
}
.ph-md {
    width: 15px;
    height: 30px;
}
.ph-short {
    width: 15px;
    height: 28px;
}
.ph-lg {
    width: 16px;
    height: 33px;
}
.ph-light {
    border-color: #a6a6a6;
    border-radius: 1px;
}
.ph-silver {
    border-color: #9b9b9b;
}
.ph-brown {
    border-color: #8a7d72;
}
.tablet-ic {
    display: block;
    border: 1.5px solid #2b2b2b;
    background-color: #fff;
    border-radius: 1.5px;
}
.tab-mini {
    width: 19px;
    height: 30px;
    border-width: 2.5px 1.5px;
    border-color: #111;
}
.tab-air {
    width: 24px;
    height: 33px;
}
.tab-grey {
    border-color: #444;
    border-width: 2px;
}
.tab-galaxy {
    width: 23px;
    height: 33px;
    border-color: #555;
}
.tab-duo {
    width: 20.5px;
    height: 33px;
    border-width: 2.5px 1.5px;
    border-color: #1a1a1a;
}
.tab-fold {
    width: 27px;
    height: 33px;
    border: 1px solid #aaa;
    border-radius: 0;
}
.section-title {
    display: flex;
    align-items: center;
    gap: 5px;
    height: 20px;
    margin: 24.5px 0 8px;
    font-size: 16.5px;
    font-weight: 400;
    color: #5a5f66;
}
.panel-scrollbar {
    position: absolute;
    left: 569px;
    top: 301px;
    width: 9px;
    height: 444px;
    background-color: #a8b0b6;
    border-radius: 5px;
}

/* windows taskbar */
.taskbar {
    flex: 0 0 50px;
    display: flex;
    align-items: center;
    background-color: #1a1a1a;
    color: #fff;
}
.task-start {
    flex: 0 0 60px;
    display: flex;
    align-items: center;
    justify-content: center;
}
.task-gap {
    flex: 0 0 3px;
}
.task-app {
    position: relative;
    flex: 0 0 62px;
    height: 50px;
    display: flex;
    align-items: center;
    justify-content: center;
}
.task-running::after {
    content: "";
    position: absolute;
    left: 6px;
    right: 5px;
    bottom: 0;
    height: 3px;
    background-color: #76b9ed;
}
.task-active {
    background-color: #4d4d4d;
}
.task-active::after {
    left: 0;
    right: 0;
}
.task-spacer {
    flex: 1;
}
.tray-ic {
    flex: none;
}
.tray-wifi {
    margin-left: 13px;
}
.tray-vol {
    margin-left: 8px;
}
.tray-batt {
    margin-left: 8px;
}
.tray-text {
    display: flex;
    flex-direction: column;
    align-items: center;
    gap: 3px;
    font-size: 14px;
    line-height: 19px;
}
.tray-lang {
    margin-left: 13px;
}
.tray-clock {
    margin-left: 20px;
}
.tray-notify {
    position: relative;
    margin-left: 20px;
    margin-right: 32px;
    display: flex;
}
.notify-count {
    position: absolute;
    left: 10px;
    top: 7px;
    width: 20px;
    height: 20px;
    background-color: #333;
    border: 1px solid #999;
    border-radius: 50%;
    font-size: 12px;
    line-height: 17px;
    text-align: center;
}
```
